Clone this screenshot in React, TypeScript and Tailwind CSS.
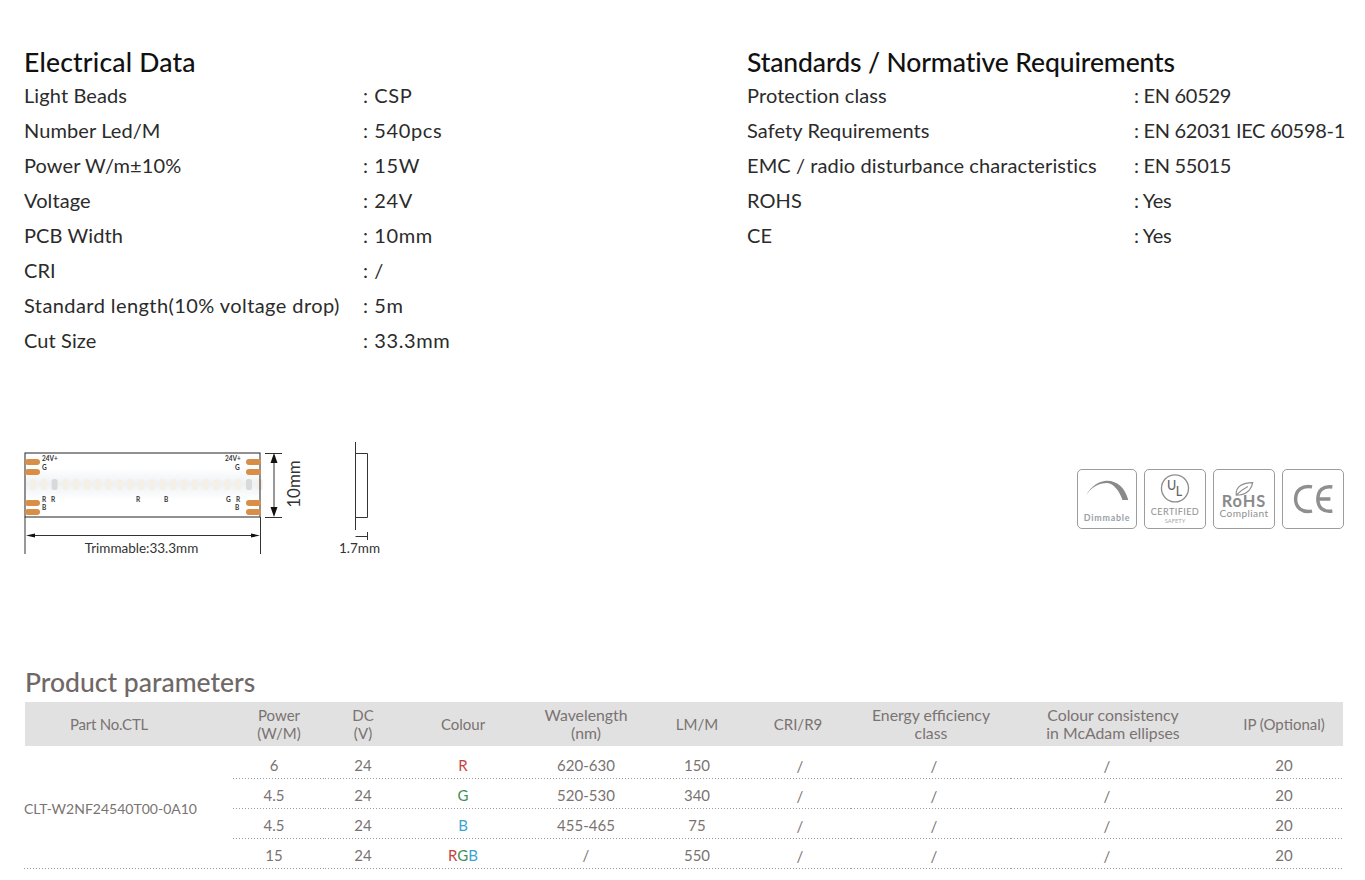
const font = "font-['Lato','Liberation_Sans',sans-serif]";

const electrical = [
  ["Light Beads", ": CSP"],
  ["Number Led/M", ": 540pcs"],
  ["Power W/m±10%", ": 15W"],
  ["Voltage", ": 24V"],
  ["PCB Width", ": 10mm"],
  ["CRI", ": /"],
  ["Standard length(10% voltage drop)", ": 5m"],
  ["Cut Size", ": 33.3mm"],
];

const standards = [
  ["Protection class", ": EN 60529"],
  ["Safety Requirements", ": EN 62031 IEC 60598-1"],
  ["EMC / radio disturbance characteristics", ": EN 55015"],
  ["ROHS", ": Yes"],
  ["CE", ": Yes"],
];

const rows = [
  { power: "6", colour: <span className="text-[#c8433f]">R</span>, wave: "620-630", lm: "150" },
  { power: "4.5", colour: <span className="text-[#3d8f57]">G</span>, wave: "520-530", lm: "340" },
  { power: "4.5", colour: <span className="text-[#3aa5d0]">B</span>, wave: "455-465", lm: "75" },
  {
    power: "15",
    colour: (
      <>
        <span className="text-[#c8433f]">R</span>
        <span className="text-[#3d8f57]">G</span>
        <span className="text-[#3aa5d0]">B</span>
      </>
    ),
    wave: "/",
    lm: "550",
  },
];

function DataList({
  title,
  items,
  labelWidth,
  titleClass,
  valueClass,
}: {
  title: string;
  items: string[][];
  labelWidth: string;
  titleClass: string;
  valueClass: string;
}) {
  return (
    <div>
      <h2 className={`h-[33px] text-[26.5px] leading-[37px] font-medium text-[#111] ${titleClass}`}>{title}</h2>
      {items.map(([label, value]) => (
        <div key={label} className="flex h-[35px] items-center text-[20px] whitespace-nowrap text-[#2b2b2b]">
          <div className={`${labelWidth} ${label.startsWith("Standard") ? "tracking-[0.42px]" : "tracking-[0.1px]"}`}>
            {label}
          </div>
          <div className={valueClass}>{value}</div>
        </div>
      ))}
    </div>
  );
}

function StripDrawing() {
  const leds = Array.from({ length: 22 }, (_, i) => 30 + i * 10.8);
  const small = { fontSize: 6.5, fontWeight: 700, fill: "#333" };
  return (
    <svg width="400" height="140" viewBox="0 430 400 140" fontFamily="Lato, sans-serif">
      <defs>
        <linearGradient id="band" x1="0" y1="0" x2="0" y2="1">
          <stop offset="0" stopColor="#ffffff" />
          <stop offset="0.5" stopColor="#eef1f4" />
          <stop offset="1" stopColor="#ffffff" />
        </linearGradient>
      </defs>
      <rect x="26" y="468" width="234" height="32" fill="url(#band)" />
      {leds.map((x, i) => (
        <rect key={x} x={x} y="479" width="6" height="11" rx="2.5" fill={i === 2 || i === 20 ? "#d9d9d9" : "#f5f0e6"} />
      ))}
      <rect x="25" y="453" width="235" height="64" fill="none" stroke="#222" strokeWidth="1" />
      {[459, 469, 500, 509].map((y) => (
        <g key={y} fill="#d98e48">
          <rect x="25" y={y} width="15" height="6" rx="3" />
          <rect x="246" y={y} width="15" height="6" rx="3" />
        </g>
      ))}
      <text x="42" y="461" style={small}>24V+</text>
      <text x="42" y="470" style={small}>G</text>
      <text x="42" y="502" style={small}>R</text>
      <text x="51" y="502" style={small}>R</text>
      <text x="42" y="510" style={small}>B</text>
      <text x="136" y="502" style={small}>R</text>
      <text x="164" y="502" style={small}>B</text>
      <text x="225" y="461" style={small}>24V+</text>
      <text x="235" y="470" style={small}>G</text>
      <text x="226" y="502" style={small}>G</text>
      <text x="236" y="502" style={small}>R</text>
      <text x="235" y="510" style={small}>B</text>

      <g stroke="#333" strokeWidth="1" fill="none">
        <path d="M265 453.5H282M265 517.5H282M274 460V510" />
        <path d="M25 517V554M260.5 517V554M32 535.5H254" />
        <path d="M355.500 442V530M355 453.500H367.500V517.500H355M355.500 536.500H367.500M367.500 532V540" />
      </g>
      <path d="M274 453L270.500 463H277.500ZM274 517L270.500 507H277.500Z" fill="#111" />
      <path d="M26 535.500L35 533.500V537.500ZM260 535.500L251 533.500V537.500Z" fill="#111" />
      <text x="141.500" y="553" textAnchor="middle" fontSize="13.500" fill="#333">Trimmable:33.3mm</text>
      <text x="359.500" y="553" textAnchor="middle" fontSize="13.500" fill="#333">1.7mm</text>
      <text x="0" y="0" transform="translate(300 484) rotate(-90)" textAnchor="middle" fontSize="17" fill="#333">10mm</text>
    </svg>
  );
}

function Badge({ width, children }: { width: string; children: React.ReactNode }) {
  return (
    <div className={`${width} h-[60px] overflow-hidden rounded-[5px] border border-[#9c9c9c] bg-white`}>{children}</div>
  );
}

function Badges() {
  return (
    <div className="mt-[39px] flex gap-[7px] pr-[21px]">
      <Badge width="w-[60px]">
        <svg viewBox="0 0 60 60" className="h-full w-full" fontFamily="Lato, sans-serif">
          <path d="M8 27C13 16 23 11 30 11C41 11 49 19 52 31L46 31C43 22 37 14 30 13.500C22 13.500 13 18 8 27Z" fill="#8a8a8a" />
          <text x="30" y="53" textAnchor="middle" fontSize="9.200" fontWeight="700" letterSpacing="0.8" fill="#9aa0a6">Dimmable</text>
        </svg>
      </Badge>
      <Badge width="w-[62px]">
        <svg viewBox="0 0 62 60" className="h-full w-full" fontFamily="Lato, sans-serif">
          <circle cx="31" cy="19" r="14" fill="none" stroke="#8f8f8f" strokeWidth="1.400" />
          <text x="27.500" y="21" textAnchor="middle" fontSize="13" fontWeight="500" fill="#666">U</text>
          <text x="35" y="27" textAnchor="middle" fontSize="13" fontWeight="500" fill="#666">L</text>
          <text x="31" y="47" textAnchor="middle" fontSize="9.500" letterSpacing="0.4" fill="#8f8f8f">CERTIFIED</text>
          <text x="31" y="55" textAnchor="middle" fontSize="6" fill="#a8a8a8">SAFETY</text>
        </svg>
      </Badge>
      <Badge width="w-[62px]">
        <svg viewBox="0 0 62 60" className="h-full w-full" fontFamily="Lato, sans-serif">
          <path d="M23 26C22 17 30 13 40 13C38 22 32 26 23 26ZM23 26C27 22 31 19 35 17" fill="none" stroke="#8f8f8f" strokeWidth="1.200" />
          <text x="31" y="38" textAnchor="middle" fontSize="17" fontWeight="700" letterSpacing="1" fill="#8a8a8a">RoHS</text>
          <text x="31" y="49" textAnchor="middle" fontSize="10.500" letterSpacing="0.400" fill="#8f8f8f">Compliant</text>
        </svg>
      </Badge>
      <Badge width="w-[62px]">
        <svg viewBox="0 0 62 60" className="h-full w-full">
          <path d="M30 17.500C20 15.500 13 21 13 30C13 39 20 44.500 30 42.500" fill="none" stroke="#8f8f8f" strokeWidth="3.600" />
          <path d="M51 17.500C42 16 36 21 36 30C36 39 42 44 51 42.500M37 30H49" fill="none" stroke="#8f8f8f" strokeWidth="3.600" />
        </svg>
      </Badge>
    </div>
  );
}

const dots =
  "bg-[repeating-linear-gradient(90deg,#9a9a9a_0,#9a9a9a_1px,transparent_1px,transparent_3px)] bg-[length:100%_1px] bg-bottom bg-no-repeat";

function ValueCell({ children, className = "" }: { children: React.ReactNode; className?: string }) {
  return <div className={`flex items-center justify-center ${dots} ${className}`}>{children}</div>;
}

export default function App() {
  return (
    <div className={`${font} h-[880px] w-[1365px] overflow-hidden bg-white pt-[44px]`}>
      <div className="flex">
        <div className="w-[723px] pl-6">
          <DataList
            title="Electrical Data"
            items={electrical}
            labelWidth="w-[339px]"
            titleClass="tracking-[0.2px]"
            valueClass="tracking-[0.6px]"
          />
        </div>
        <div className="pl-[24px]">
          <DataList
            title="Standards / Normative Requirements"
            items={standards}
            labelWidth="w-[387px]"
            titleClass="tracking-[-0.1px]"
            valueClass="tracking-[-0.3px]"
          />
        </div>
      </div>

      <div className="mt-[73px] flex items-start justify-between">
        <StripDrawing />
        <Badges />
      </div>

      <h2 className="mt-[94px] ml-[25px] h-[38px] text-[26.5px] leading-[36px] font-medium text-[#6f6866]">
        Product parameters
      </h2>

      <div className="ml-[25px] w-[1318px] text-[15px] text-[#7a7372]">
        <div className="grid h-[44px] grid-cols-[208px_92px_78px_120px_126px_96px_106px_160px_204px_128px] items-center bg-[#e1e1e1] pb-[1px] text-center leading-[18px]">
          <div className="pr-10 tracking-[-0.2px]">Part No.CTL</div>
          <div>Power<br />(W/M)</div>
          <div className="pr-[2px]">DC<br />(V)</div>
          <div>Colour</div>
          <div className="text-[15.8px]">Wavelength<br />(nm)</div>
          <div>LM/M</div>
          <div>CRI/R9</div>
          <div className="text-[15.8px]">Energy efficiency<br />class</div>
          <div className="text-[15.8px]">Colour consistency<br />in McAdam ellipses</div>
          <div className="pl-[10px]">IP (Optional)</div>
        </div>

        <div className="mt-[3px] grid auto-rows-[30px] grid-cols-[208px_92px_78px_120px_126px_96px_106px_160px_204px_128px] text-center">
          <div className={`row-span-4 -ml-px flex items-center pb-[2px] text-left text-[14px] ${dots}`}>
            CLT-W2NF24540T00-0A10
          </div>
          {rows.map((row) => (
            <div key={row.lm} className="contents">
              <ValueCell className="pt-[2px] pr-[10px]">{row.power}</ValueCell>
              <ValueCell className="pt-[2px] pr-[2px]">24</ValueCell>
              <ValueCell className="pt-[2px]">{row.colour}</ValueCell>
              <ValueCell className="pt-[3px]">{row.wave}</ValueCell>
              <ValueCell className="pt-[2px]">{row.lm}</ValueCell>
              <ValueCell className="pt-[4px] pl-[4px]">/</ValueCell>
              <ValueCell className="pt-[4px] pl-[6px]">/</ValueCell>
              <ValueCell className="pt-[4px] pr-[12px]">/</ValueCell>
              <ValueCell className="pt-[3px] pl-[10px]">20</ValueCell>
            </div>
          ))}
        </div>
      </div>
    </div>
  );
}
